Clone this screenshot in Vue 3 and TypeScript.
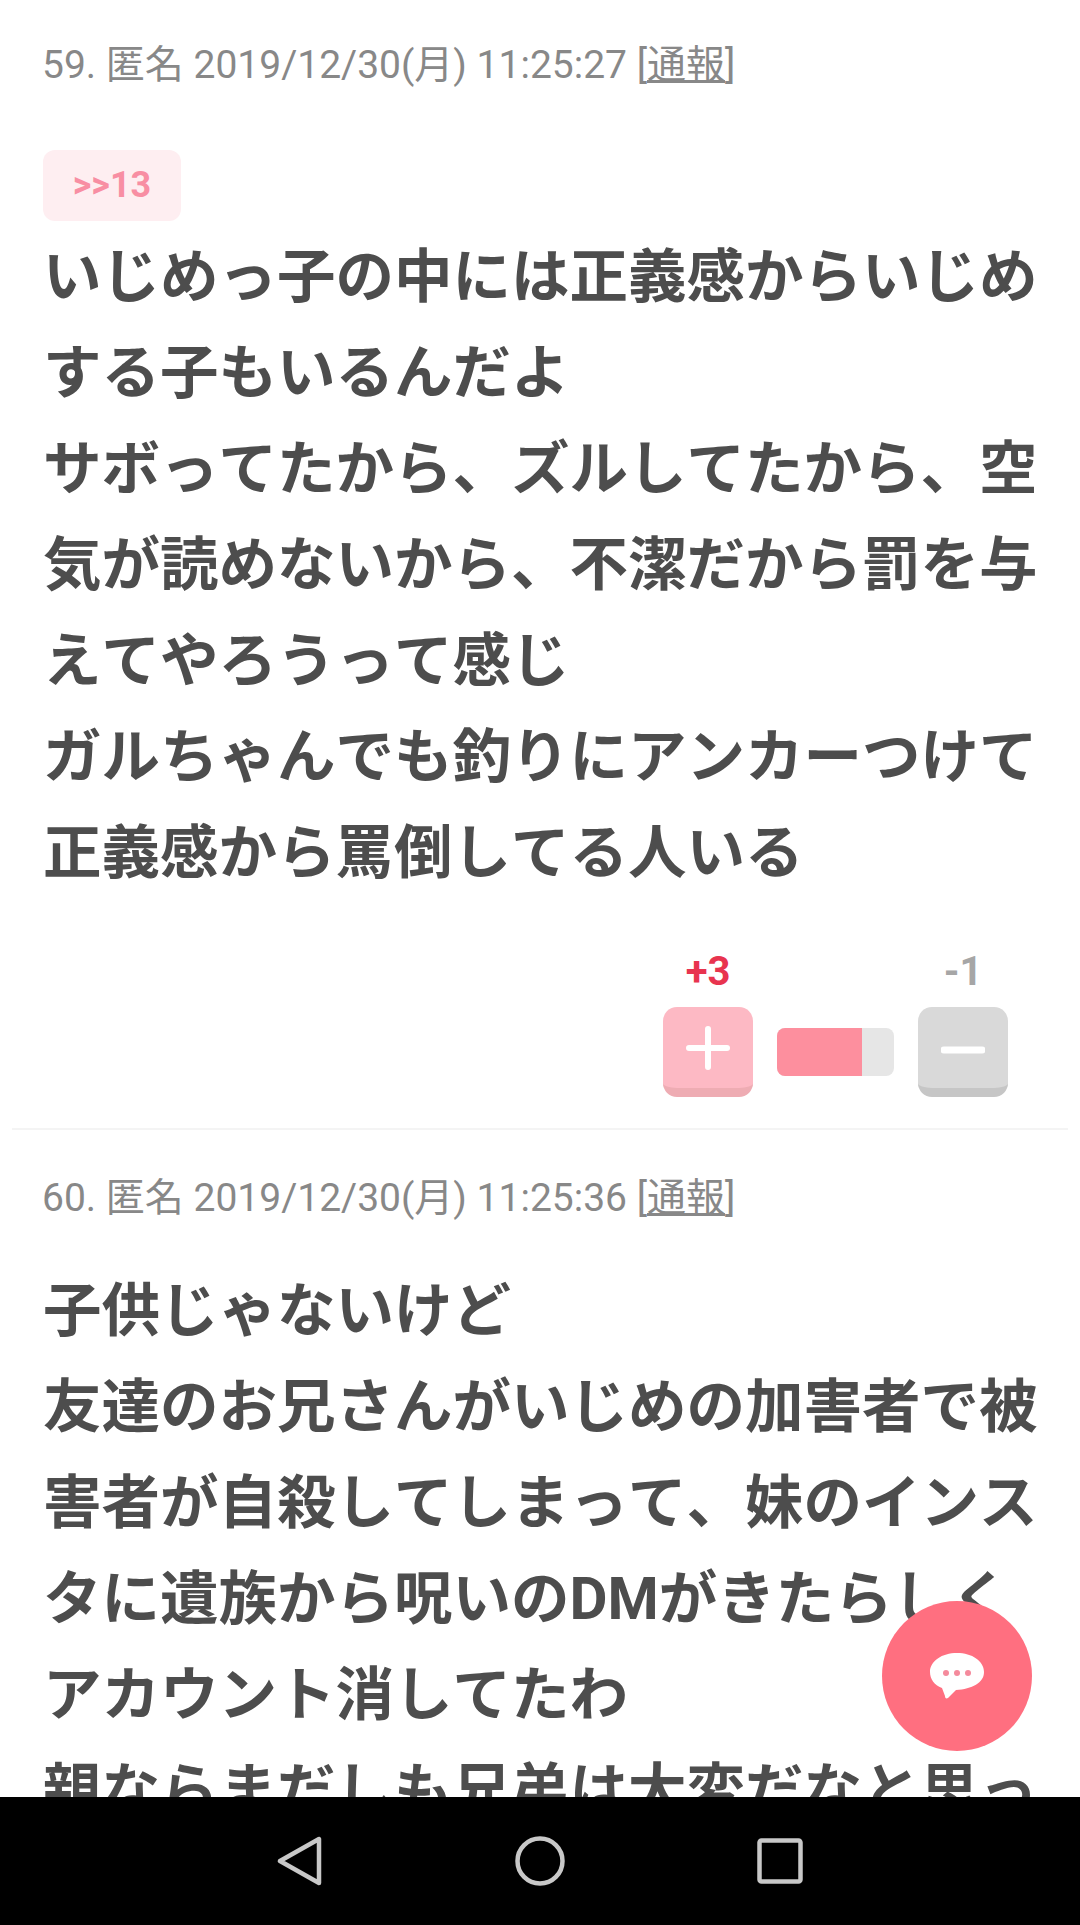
<script setup lang="ts">
interface Vote {
  plus: string;
  minus: string;
  ratio: number;
}

interface Post {
  no: number;
  time: string;
  anchor?: string;
  lines: string[];
  vote?: Vote;
}

const posts: Post[] = [
  {
    no: 59,
    time: '2019/12/30(月) 11:25:27',
    anchor: '>>13',
    lines: [
      'いじめっ子の中には正義感からいじめ',
      'する子もいるんだよ',
      'サボってたから、ズルしてたから、空',
      '気が読めないから、不潔だから罰を与',
      'えてやろうって感じ',
      'ガルちゃんでも釣りにアンカーつけて',
      '正義感から罵倒してる人いる',
    ],
    vote: { plus: '+3', minus: '-1', ratio: 73 },
  },
  {
    no: 60,
    time: '2019/12/30(月) 11:25:36',
    lines: [
      '子供じゃないけど',
      '友達のお兄さんがいじめの加害者で被',
      '害者が自殺してしまって、妹のインス',
      'タに遺族から呪いのDMがきたらしく',
      'アカウント消してたわ',
      '親ならまだしも兄弟は大変だなと思っ',
    ],
  },
];
</script>

<template>
  <div class="screen">
    <main class="thread">
      <article v-for="post in posts" :key="post.no" class="post">
        <div class="meta">
          {{ post.no }}. 匿名 {{ post.time }} [<span class="report">通報</span>]
        </div>
        <div class="body" :class="{ 'has-anchor': post.anchor }">
          <span v-if="post.anchor" class="anchor">{{ post.anchor }}</span>
          <div v-for="line in post.lines" :key="line" class="line">{{ line }}</div>
        </div>
        <div v-if="post.vote" class="vote">
          <div class="vote-side">
            <span class="count plus-count">{{ post.vote.plus }}</span>
            <button class="vote-btn plus" type="button" aria-label="plus">
              <svg width="44" height="44" viewBox="0 0 44 44">
                <path d="M22 3V41M3 22H41" stroke="#fff" stroke-width="6" stroke-linecap="round" />
              </svg>
            </button>
          </div>
          <div class="bar">
            <div class="bar-fill" :style="{ width: post.vote.ratio + '%' }" />
          </div>
          <div class="vote-side">
            <span class="count minus-count">{{ post.vote.minus }}</span>
            <button class="vote-btn minus" type="button" aria-label="minus">
              <svg width="44" height="44" viewBox="0 0 44 44">
                <path d="M3 24H41" stroke="#fff" stroke-width="7" stroke-linecap="round" />
              </svg>
            </button>
          </div>
        </div>
      </article>
      <button class="fab" type="button" aria-label="comment">
        <svg width="56" height="48" viewBox="0 0 56 48">
          <path
            d="M28 1C43 1 55 9 55 20C55 31 43 37 27 38L19 46C17 47 16 46 16 44L13 36C5 33 1 27 1 20C1 9 13 1 28 1Z"
            fill="#fff"
          />
          <circle cx="17" cy="21" r="3" fill="#f58a9c" />
          <circle cx="28" cy="21" r="3" fill="#f58a9c" />
          <circle cx="39" cy="21" r="3" fill="#f58a9c" />
        </svg>
      </button>
    </main>
    <nav class="navbar">
      <svg width="46" height="50" viewBox="0 0 46 50">
        <path d="M42 3V47L3 25Z" fill="none" stroke="#c8c8c8" stroke-width="4.5" stroke-linejoin="round" />
      </svg>
      <svg width="50" height="50" viewBox="0 0 50 50">
        <circle cx="25" cy="25" r="22.5" fill="none" stroke="#c8c8c8" stroke-width="4.5" />
      </svg>
      <svg width="46" height="46" viewBox="0 0 46 46">
        <rect x="2.5" y="2.5" width="41" height="41" rx="2" fill="none" stroke="#c8c8c8" stroke-width="4.5" />
      </svg>
    </nav>
  </div>
</template>

<style scoped>
.screen {
  width: 1080px;
  height: 1925px;
  display: flex;
  flex-direction: column;
  background: #fff;
  font-family: Roboto, "Noto Sans CJK JP", sans-serif;
  font-kerning: none;
}
.thread {
  position: relative;
  flex: 1;
  min-height: 0;
  overflow: hidden;
}
.post {
  margin: 0 12px;
  padding: 44px 32px 0 31px;
  border-bottom: 2px solid #f4f4f4;
}
.post:first-child {
  padding-top: 41px;
}
.meta {
  margin-left: -1px;
  font-size: 39px;
  line-height: 48px;
  color: #888;
  white-space: nowrap;
}
.report {
  text-decoration: underline;
}
.body {
  margin-top: 41px;
}
.body.has-anchor {
  margin-top: 61px;
}
.anchor {
  display: block;
  box-sizing: border-box;
  width: 138px;
  height: 71px;
  margin-bottom: 8px;
  border-radius: 12px;
  background: #feeef1;
  color: #f88ea3;
  font-size: 36px;
  font-weight: 700;
  line-height: 71px;
  text-align: center;
}
.line {
  font-size: 58.5px;
  font-weight: 700;
  line-height: 96px;
  color: #4d4d4d;
  white-space: nowrap;
}
.vote {
  display: flex;
  justify-content: flex-end;
  align-items: flex-end;
  margin-top: 49px;
  padding-right: 28px;
  padding-bottom: 31px;
}
.vote-side {
  display: flex;
  flex-direction: column;
  align-items: center;
  width: 90px;
}
.count {
  font-size: 40px;
  font-weight: 700;
  line-height: 44px;
  margin-bottom: 13px;
}
.plus-count {
  color: #e8344f;
}
.minus-count {
  color: #a6a6a6;
}
.vote-btn {
  display: flex;
  align-items: center;
  justify-content: center;
  box-sizing: border-box;
  width: 90px;
  height: 90px;
  padding: 0;
  border: 0;
  border-radius: 14px;
}
.plus {
  background: #fdb9c4;
  border-bottom: 9px solid #eeacb3;
}
.minus {
  background: #d9d9d9;
  border-bottom: 9px solid #c6c6c6;
}
.bar {
  width: 117px;
  height: 48px;
  margin: 0 24px 21px;
  border-radius: 8px;
  background: #e6e6e6;
  overflow: hidden;
}
.bar-fill {
  height: 100%;
  background: #fd8f9e;
}
.fab {
  position: absolute;
  left: 882px;
  top: 1601px;
  display: flex;
  align-items: center;
  justify-content: center;
  width: 150px;
  height: 150px;
  padding: 0;
  border: 0;
  border-radius: 50%;
  background: #ff6f80;
}
.navbar {
  flex: none;
  height: 128px;
  background: #000;
  display: grid;
  grid-template-columns: repeat(3, 240px);
  justify-content: center;
  justify-items: center;
  align-items: center;
}
</style>

<style>
html,
body {
  margin: 0;
  background: #fff;
}
</style>
